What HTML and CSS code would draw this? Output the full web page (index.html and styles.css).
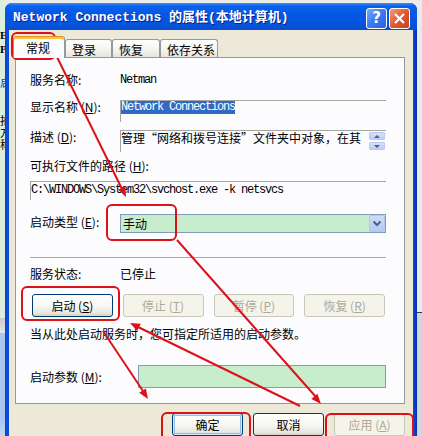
FILE: index.html
```html
<!DOCTYPE html>
<html lang="zh-CN">

<head>
    <meta charset="UTF-8">
    <meta name="viewport" content="width=device-width, initial-scale=1.0">
    <title>Network Connections 的属性</title>

    <link rel="stylesheet" href="styles.css">

</head>

<body>

    <div class="screen">
        <div class="ladoEsq">
            <span class="frag negrito" style="margin-top: 29px">E</span>
            <span class="frag negrito" style="margin-top: 2px">P</span>
            <span class="frag link" style="margin-top: 21px">启</span>
            <span class="frag" style="margin-top: 26px">拍</span>
            <span class="frag">方</span>
            <span class="frag">称</span>
        </div>

        <div class="janela">
            <div class="titulo">
                <span class="tituloTexto">Network Connections 的属性(本地计算机)</span>
                <span class="capBtn ajuda">?</span>
                <span class="capBtn fechar">
                    <svg width="19" height="19" viewBox="0 0 19 19">
                        <path d="M5 5 L14 14 M14 5 L5 14" stroke="#fff" stroke-width="2.2" fill="none" />
                    </svg>
                </span>
            </div>

            <div class="cliente">
                <div class="abas">
                    <span class="aba ativa">常规</span>
                    <span class="aba" style="width: 47px">登录</span>
                    <span class="aba" style="width: 48px">恢复</span>
                    <span class="aba" style="width: 58px">依存关系</span>
                </div>

                <div class="painel">
                    <div class="linha l1">
                        <span class="rotulo">服务名称:</span>
                        <span class="mono">Netman</span>
                    </div>

                    <div class="linha l2">
                        <span class="rotulo">显示名称 (<u>N</u>):</span>
                        <div class="campo alto">
                            <span class="mono selecionado">Network Connections</span>
                        </div>
                    </div>

                    <div class="linha l3">
                        <span class="rotulo">描述 (<u>D</u>):</span>
                        <div class="campo alto">
                            <span class="descricao">管理“网络和拨号连接”文件夹中对象，在其</span>
                            <div class="spin">
                                <span class="spinBtn"><i class="seta cima"></i></span>
                                <span class="spinBtn"><i class="seta baixo"></i></span>
                            </div>
                        </div>
                    </div>

                    <div class="linha l4">
                        <span>可执行文件的路径 (<u>H</u>):</span>
                    </div>

                    <div class="campo caminho l5">
                        <span class="mono">C:\WINDOWS\System32\svchost.exe -k netsvcs</span>
                    </div>

                    <div class="linha l6">
                        <span class="rotulo rotuloCombo">启动类型 (<u>E</u>):</span>
                        <div class="combo">
                            <span class="comboTexto">手动</span>
                            <span class="comboBtn">
                                <svg width="14" height="15" viewBox="0 0 14 15">
                                    <polyline points="3.5,5.5 7,9 10.5,5.5" stroke="#4d6185" stroke-width="2" fill="none" />
                                </svg>
                            </span>
                        </div>
                    </div>

                    <div class="separador"></div>

                    <div class="linha l7">
                        <span class="rotulo">服务状态:</span>
                        <span>已停止</span>
                    </div>

                    <div class="botoes l8">
                        <span class="btn">启动 (<u>S</u>)</span>
                        <span class="btn desativado">停止 (<u>T</u>)</span>
                        <span class="btn desativado">暂停 (<u>P</u>)</span>
                        <span class="btn desativado">恢复 (<u>R</u>)</span>
                    </div>

                    <div class="linha l9">
                        <span>当从此处启动服务时，您可指定所适用的启动参数。</span>
                    </div>

                    <div class="linha l10">
                        <span class="rotulo largo">启动参数 (<u>M</u>):</span>
                        <div class="entrada"></div>
                    </div>
                </div>

                <div class="rodape">
                    <span class="btn padrao">确定</span>
                    <span class="btn">取消</span>
                    <span class="btn desativado">应用 (<u>A</u>)</span>
                </div>
            </div>
        </div>

        <div class="ladoDir"></div>

        <!-- marcas vermelhas por cima do print -->
        <svg class="marcas" width="422" height="436" viewBox="0 0 422 436">
            <g fill="none" stroke="#dc1219" stroke-width="2">
                <rect x="12" y="33" width="43" height="26" rx="5" />
                <rect x="107" y="205" width="69" height="35" rx="5" />
                <rect x="22" y="287" width="97" height="33" rx="5" />
                <rect x="162" y="413" width="88" height="34" rx="5" />
                <rect x="326" y="414" width="87" height="34" rx="5" />
                <line x1="56" y1="55" x2="122" y2="189" />
                <line x1="177" y1="240" x2="316" y2="397" />
                <line x1="300" y1="406" x2="138" y2="327" />
                <line x1="103" y1="331" x2="143" y2="391" />
            </g>
            <g fill="#dc1219">
                <polygon points="126,197 118.1,189.7 125.3,186.3" />
                <polygon points="321,404 311.4,399.1 317.4,393.8" />
                <polygon points="130,323 140.7,323.8 137.2,331" />
                <polygon points="148,399 139.2,392.8 145.9,388.4" />
            </g>
        </svg>
    </div>

</body>

</html>
```

FILE: styles.css
```css
* {
    box-sizing: border-box;
}

html,
body {
    margin: 0;
    padding: 0;
}

body {
    font-family: "Noto Sans CJK SC", sans-serif;
    font-size: 12px;
    color: #000;
}

u {
    text-decoration: underline;
    text-underline-offset: 1px;
}

.screen {
    position: relative;
    display: flex;
    width: 422px;
    height: 436px;
    overflow: hidden;
    background: #e9ece8;
}

.ladoEsq {
    display: flex;
    flex-direction: column;
    width: 5px;
    flex: none;
    overflow: hidden;
    background: linear-gradient(#dcefdb 0, #dcefdb 318px, #c9ccd2 318px, #e6e6e4 333px, #a9c6ee 333px, #a9c6ee 420px, #c8d8ee 436px);
}

.frag {
    display: block;
    height: 12px;
    font-size: 11px;
    line-height: 12px;
    white-space: nowrap;
    overflow: hidden;
}

.negrito {
    font-weight: bold;
    font-family: "Liberation Serif", serif;
}

.link {
    color: #1a3cc8;
    text-decoration: underline;
}

.ladoDir {
    width: 5px;
    flex: none;
    background: linear-gradient(#e8ebee 0, #e8ebee 312px, #3a3a3a 312px, #3a3a3a 313px, #cdd6e2 313px);
}

.janela {
    display: flex;
    flex-direction: column;
    width: 412px;
    height: 433px;
    margin-top: 3px;
    flex: none;
    background: linear-gradient(90deg, #0a3fc8, #0b4fe0 2px, #0a47d6 4px, #0a47d6 408px, #0b3fc4 410px, #082ea8);
    border-radius: 7px 7px 0 0;
}

.titulo {
    display: flex;
    align-items: flex-start;
    height: 27px;
    padding: 0 7px 0 8px;
    border-radius: 7px 7px 0 0;
    background: linear-gradient(#3c8cf8 0, #0a62ec 3px, #0459e4 40%, #0254de 75%, #0b4ccd 100%);
}

.tituloTexto {
    flex: 1;
    margin-top: 7px;
    color: #fff;
    font-family: "Liberation Mono", "Noto Sans CJK SC", monospace;
    font-weight: bold;
    font-size: 13px;
    line-height: 16px;
    white-space: nowrap;
    text-shadow: 1px 1px #0a1e8c;
}

.capBtn {
    display: flex;
    align-items: center;
    justify-content: center;
    width: 21px;
    height: 21px;
    margin-top: 5px;
    border: 1px solid #fff;
    border-radius: 3px;
    color: #fff;
}

.ajuda {
    margin-right: 2px;
    background: linear-gradient(135deg, #78aafc, #3a78f0 50%, #2a62e0);
    font-family: "DejaVu Sans", sans-serif;
    font-weight: bold;
    font-size: 15px;
    line-height: 19px;
}

.fechar {
    background: linear-gradient(135deg, #f0a082, #e0592f 50%, #c8401a);
}

.cliente {
    display: flex;
    flex-direction: column;
    flex: 1;
    margin: 0 4px;
    padding-top: 6px;
    background: #ece9d8;
    overflow: hidden;
}

.abas {
    position: relative;
    z-index: 1;
    display: flex;
    align-items: flex-end;
    height: 21px;
    padding-left: 4px;
}

.aba {
    height: 18px;
    padding: 2px 0 0 6px;
    line-height: 15px;
    border: 1px solid #919b9c;
    border-bottom: none;
    border-radius: 3px 3px 0 0;
    background: linear-gradient(#ffffff, #f4f3ee 60%, #e6e4dc);
}

.ativa {
    width: 52px;
    height: 22px;
    margin-bottom: -1px;
    padding: 3px 0 0 12px;
    border-top: 1px solid #e68b2c;
    background: #fcfcfe;
    box-shadow: inset 0 2px #ffc73c;
}

.painel {
    display: flex;
    flex-direction: column;
    height: 357px;
    margin: 0 8px 0 6px;
    padding: 0 18px 0 14px;
    border: 1px solid #919b9c;
    background: #fcfcfe;
}

.linha {
    display: flex;
    align-items: flex-start;
    line-height: 14px;
}

.rotulo {
    width: 90px;
    flex: none;
    white-space: nowrap;
}

.largo {
    width: 108px;
}

.mono {
    font-family: "Liberation Mono", monospace;
    font-size: 12px;
    letter-spacing: -1.2px;
    white-space: nowrap;
}

.campo {
    display: flex;
    flex: 1;
    border-top: 1px solid #a6a6a0;
    border-left: 1px solid #a6a6a0;
}

.alto {
    height: 22px;
    line-height: 13px;
}

.selecionado {
    align-self: flex-start;
    background: #316ac5;
    color: #fff;
}

.descricao {
    flex: 1;
    white-space: nowrap;
    line-height: 14px;
}

.spin {
    display: flex;
    flex-direction: column;
    gap: 2px;
    width: 16px;
    margin: 1px 1px 0 0;
}

.spinBtn {
    display: flex;
    align-items: center;
    justify-content: center;
    height: 8px;
    border: 1px solid #b9c9ef;
    border-radius: 1px;
    background: linear-gradient(#d6e1fb, #bccdf4);
}

.seta {
    width: 0;
    height: 0;
    border-left: 3px solid transparent;
    border-right: 3px solid transparent;
}

.cima {
    border-bottom: 3px solid #4d6185;
}

.baixo {
    border-top: 3px solid #4d6185;
}

.caminho {
    flex: none;
    height: 19px;
    padding: 1px 0 0 0;
    line-height: 14px;
}

.combo {
    display: flex;
    flex: 1;
    height: 19px;
    border: 1px solid #7f9db9;
    background: #c7edcc;
}

.comboTexto {
    flex: 1;
    padding-left: 2px;
    line-height: 17px;
}

.comboBtn {
    display: flex;
    align-items: center;
    justify-content: center;
    width: 16px;
    border: 1px solid #b4c5ee;
    border-radius: 2px;
    background: linear-gradient(#cfdbf9, #b6c9f3);
}

.rotuloCombo {
    padding-top: 1px;
}

.separador {
    margin-top: 24px;
    border-top: 1px solid #aca899;
    border-bottom: 1px solid #ffffff;
}

.botoes {
    display: grid;
    grid-template-columns: repeat(4, 1fr);
    column-gap: 10px;
    margin: 13px 1px 0 2px;
}

.btn {
    display: flex;
    align-items: center;
    justify-content: center;
    height: 23px;
    border: 1px solid #003c74;
    border-radius: 3px;
    background: linear-gradient(#ffffff, #f6f6f2 55%, #e8e7e0 85%, #d8d3c8);
    line-height: 14px;
    white-space: nowrap;
}

.desativado {
    border-color: #c9c7ba;
    color: #aca899;
    background: #f5f4ea;
}

.padrao {
    box-shadow: inset 0 0 0 1px #cee7ff, inset 0 0 0 2px #9cbcec;
}

.entrada {
    flex: 1;
    height: 23px;
    border: 1px solid #7f9db9;
    background: #c7edcc;
}

.l1 { margin-top: 15px; }
.l2 { margin-top: 13px; }
.l3 { margin-top: 8px; }
.l4 { margin-top: 7px; }
.l5 { margin-top: 8px; }
.l6 { margin-top: 14px; }
.l7 { margin-top: 8px; }
.l9 { margin-top: 10px; }

.l10 {
    align-items: center;
    margin-top: 24px;
}

.rodape {
    display: flex;
    justify-content: flex-end;
    gap: 10px;
    margin: 9px 8px 0 0;
}

.rodape .btn {
    width: 71px;
    flex: none;
}

.marcas {
    position: absolute;
    left: 0;
    top: 0;
    pointer-events: none;
}
```
